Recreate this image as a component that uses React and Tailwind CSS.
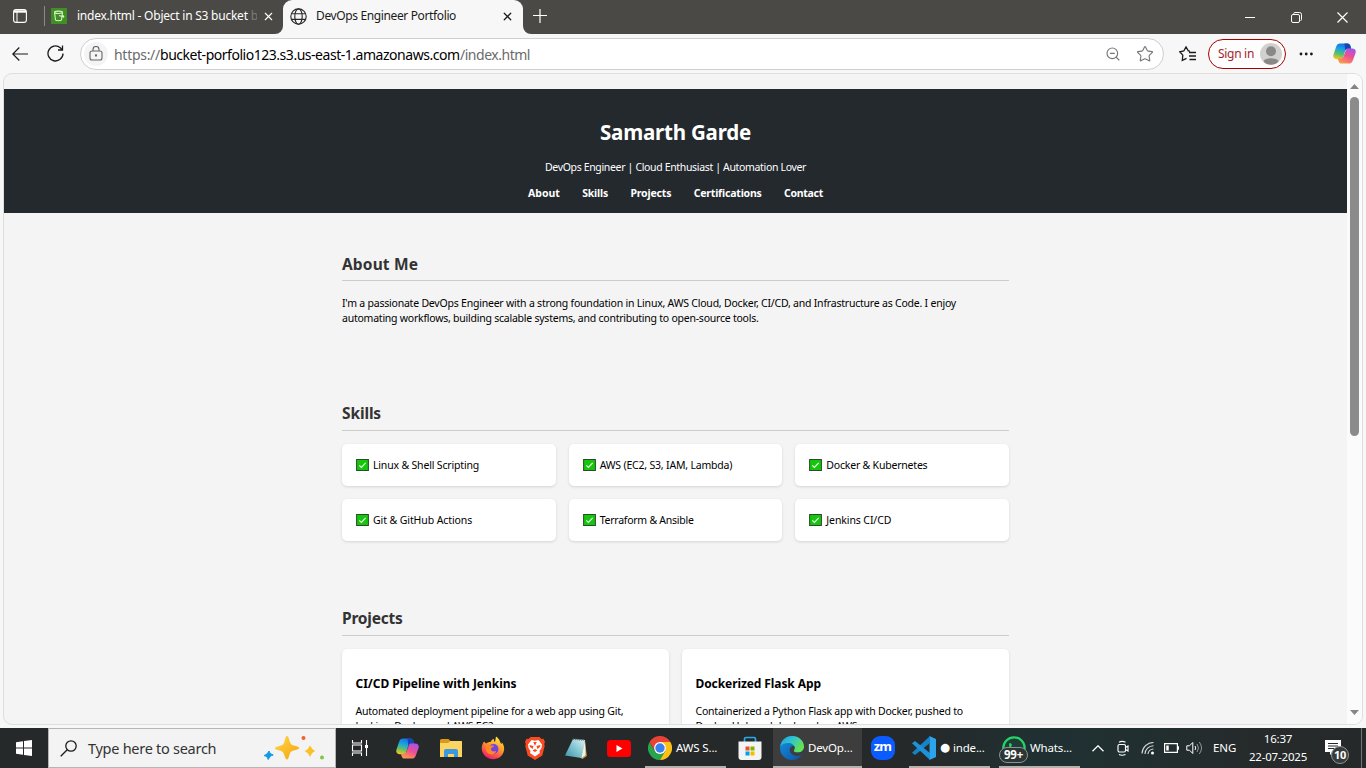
import { Star, ZoomOut, X } from "lucide-react";

const skills = [
  { name: "Linux & Shell Scripting", cls: "tracking-[-0.17px]" },
  { name: "AWS (EC2, S3, IAM, Lambda)", cls: "tracking-[-0.19px]" },
  { name: "Docker & Kubernetes", cls: "tracking-[-0.2px]" },
  { name: "Git & GitHub Actions", cls: "tracking-[-0.09px]" },
  { name: "Terraform & Ansible", cls: "tracking-[-0.25px]" },
  { name: "Jenkins CI/CD", cls: "tracking-[-0.1px]" },
];

const projects = [
  {
    title: "CI/CD Pipeline with Jenkins",
    titleCls: "tracking-[-0.03px]",
    lines: ["Automated deployment pipeline for a web app using Git,", "Jenkins, Docker, and AWS EC2."],
  },
  {
    title: "Dockerized Flask App",
    titleCls: "tracking-[-0.09px]",
    lines: ["Containerized a Python Flask app with Docker, pushed to", "Docker Hub and deployed on AWS."],
  },
];

function CopilotIcon({ id, className }) {
  return (
    <svg viewBox="0 0 24 22" className={className}>
      <defs>
        <linearGradient id={id + "a"} x1="0.6" y1="0" x2="0.3" y2="1">
          <stop offset="0" stopColor="#1c6be0" />
          <stop offset=".35" stopColor="#15a0e6" />
          <stop offset=".7" stopColor="#5fc06a" />
          <stop offset="1" stopColor="#f5c518" />
        </linearGradient>
        <linearGradient id={id + "b"} x1="0.8" y1="0" x2="0.3" y2="1">
          <stop offset="0" stopColor="#a252ed" />
          <stop offset=".5" stopColor="#ee5091" />
          <stop offset="1" stopColor="#fb9a4d" />
        </linearGradient>
      </defs>
      <path d="M7.500.5h7.500c1.900 0 2.700 1 3.200 2.700L19 6h-3.200c-1.900 0-2.600.8-3.100 2.500l-1.900 6.200c-.6 1.600-1.300 2.300-2.800 2.300H4c-2.700 0-4.400-1.800-3.600-4.700L3.200 4C4 1.700 5.200.5 7.500.5z" fill={`url(#${id}a)`} />
      <path d="M12 .5h3c1.900 0 2.700 1 3.200 2.700L19 6h-3.200c-1.600 0-2.500.6-3 2z" fill="#1545b5" />
      <path d="M16.500 21.500H9c-1.900 0-2.700-1-3.200-2.700L5 16.500h3c1.900 0 2.600-.8 3.100-2.500L13.200 8c.6-1.600 1.300-2.300 2.800-2.300h4c2.700 0 4.400 1.800 3.600 4.700L20.800 18c-.8 2.300-2 3.500-4.300 3.500z" fill={`url(#${id}b)`} />
    </svg>
  );
}

function CheckBadge() {
  return (
    <svg viewBox="0 0 13 12" className="h-3 w-[13px] shrink-0">
      <rect x=".6" y=".5" width="11.800" height="11" fill="#16c60c" stroke="#2b4a2b" />
      <path d="m3.300 6.400 2.100 2L9.700 3.800" fill="none" stroke="#e8ffe6" strokeWidth="1.200" />
    </svg>
  );
}

function TabBar() {
  return (
    <div className="flex h-[34px] bg-[#4b4946] text-[12px] text-white">
      <div className="flex w-[283px] items-center pb-0.5 pl-[13px]">
        <svg viewBox="0 0 14 14" className="size-[14px]" fill="none" stroke="#fff">
          <rect x=".6" y=".6" width="12.800" height="12.800" rx="2.500" strokeWidth="1.100" />
          <path d="M1 2.500h12" strokeWidth="2.400" />
          <path d="M4 3v10" strokeWidth="1" />
        </svg>
        <div className="ml-[17px] h-5 w-px bg-[#8d8b89]" />
        <svg viewBox="0 0 16 16" className="ml-1.5 size-4">
          <rect width="16" height="16" fill="#3f8f24" />
          <path d="M3.500 4.200c0-1.500 8-1.500 8 0l-1 7.800c-.6 1-5.400 1-6 0z M3.700 4.800c1.500 1 6 1 7.600 0 M8 7.500l4.700 1.500c.5-.8-.4-1.200-1.500-1.700" fill="none" stroke="#d9f3cb" strokeWidth="1.100" />
        </svg>
        <div className="ml-2.5 flex w-[180px] overflow-hidden whitespace-pre">
          <span className="tracking-[-0.235px]">index.html - Object in S3 bucket</span>
          <span className="text-[#7b7977]"> b</span>
        </div>
        <X className="ml-[5px] size-[13px]" strokeWidth={2} />
      </div>
      <div className="relative flex w-60 items-center rounded-t-[9px] bg-[#f7f7f7] pb-0.5 pl-[7px] text-[#1b1b1b]">
        <svg viewBox="0 0 8 8" className="absolute bottom-0 -left-2 size-2"><path d="M8 0v8H0a8 8 0 0 0 8-8z" fill="#f7f7f7" /></svg>
        <svg viewBox="0 0 8 8" className="absolute -right-2 bottom-0 size-2"><path d="M0 0v8h8a8 8 0 0 1-8-8z" fill="#f7f7f7" /></svg>
        <svg viewBox="0 0 17 17" className="size-[17px]" fill="none" stroke="#2a2a2a" strokeWidth="1.150">
          <circle cx="8.500" cy="8.500" r="7.700" />
          <ellipse cx="8.500" cy="8.500" rx="3.700" ry="7.700" />
          <path d="M1.500 5.700h14M1.500 11.300h14" />
        </svg>
        <span className="ml-[9px] w-[186px] tracking-[-0.37px] whitespace-pre">DevOps Engineer Portfolio</span>
        <X className="-ml-px size-[13px]" strokeWidth={2.300} />
      </div>
      <svg viewBox="0 0 14 14" className="mt-[9px] ml-[10px] size-[14px]" stroke="#fff" strokeWidth="1.200"><path d="M7 0v14M0 6.500h14" /></svg>
      <div className="ml-auto flex items-center pr-[18px]">
        <div className="mr-[36px] h-px w-[10px] bg-white" />
        <svg viewBox="0 0 11 11" className="mr-[35px] size-[11px]" fill="none" stroke="#fff">
          <rect x=".5" y="2.500" width="8" height="8" rx="1.500" />
          <path d="M2.800 2V1.500a1 1 0 0 1 1-1H8.500a2 2 0 0 1 2 2v5a1 1 0 0 1-1 1" />
        </svg>
        <svg viewBox="0 0 11 11" className="size-[11px]" stroke="#fff" strokeWidth="1.200"><path d="m.5.5 10 10M10.500.5l-10 10" /></svg>
      </div>
    </div>
  );
}

function Toolbar() {
  return (
    <div className="flex h-[39px] items-center bg-[#f7f7f7] pl-3">
      <svg viewBox="0 0 16 14" className="h-[14px] w-4" fill="none" stroke="#1b1b1b" strokeWidth="1.200"><path d="M16 7H.8M7.300.5.8 7l6.500 6.500" /></svg>
      <svg viewBox="0 0 17 17" className="ml-[19px] size-[17px]" fill="none" stroke="#1b1b1b" strokeWidth="1.300">
        <path d="M16 8.500A7.500 7.500 0 1 1 13.300 2.700L15.500 5M15.500.5V5H11" />
      </svg>
      <div className="ml-4 flex h-8 w-[1084px] items-center rounded-full border border-[#cfcfcf] bg-white pl-[3px]">
        <div className="flex size-6 items-center justify-center rounded-full bg-[#f4f4f4]">
          <svg viewBox="0 0 14 15" className="h-[15px] w-[14px]" fill="none" stroke="#666" strokeWidth="1.100">
            <rect x="1" y="5" width="12" height="9" rx="2" />
            <path d="M4 5V3.500a3 3 0 0 1 6 0V5" />
            <circle cx="7" cy="9.500" r=".6" fill="#555" />
          </svg>
        </div>
        <div className="ml-[6px] flex pt-px text-[14px] whitespace-pre text-[#6b6b6b]">
          <span className="w-[46px] tracking-[-0.29px]">https://</span>
          <span className="w-[300px] tracking-[-0.47px] text-black">bucket-porfolio123.s3.us-east-1.amazonaws.com</span>
          <span className="tracking-[-0.48px]">/index.html</span>
        </div>
        <ZoomOut className="ml-auto size-4 text-[#777]" strokeWidth={1.700} />
        <Star className="mr-[9px] ml-[15px] size-[18px] text-[#777]" strokeWidth={1.500} />
      </div>
      <svg viewBox="0 0 17 16" className="ml-[15px] h-4 w-[17px]" fill="none" stroke="#1b1b1b" strokeWidth="1.300">
        <path d="M11 5.200 9.300 4.900 7 .9 4.800 5l-4 .8 3 3.300-.5 5.200 4.200-2M10 6.500h7M10 10h7M10.500 13.500H17" />
      </svg>
      <div className="ml-3 flex h-[30px] w-[78px] items-center justify-between rounded-full border border-[#a80000] bg-[#fdfdfd] pr-[3px] pl-[9px] text-[12px] tracking-[-0.3px] whitespace-pre text-[#a4262c]">
        Sign in
        <svg viewBox="0 0 22 22" className="size-[22px]">
          <defs><clipPath id="avatar"><circle cx="11" cy="11" r="11" /></clipPath></defs>
          <g clipPath="url(#avatar)">
            <rect width="22" height="22" fill="#d2d0ce" />
            <circle cx="11" cy="8.300" r="5" fill="#8a8886" />
            <path d="M3.500 18c2-3.700 13-3.700 15 0-2 5-13 5-15 0z" fill="#8a8886" />
          </g>
        </svg>
      </div>
      <svg viewBox="0 0 14 4" className="ml-[13px] h-1 w-[14px]" fill="#1b1b1b"><circle cx="2" cy="2" r="1.400" /><circle cx="7.200" cy="2" r="1.400" /><circle cx="12.400" cy="2" r="1.400" /></svg>
      <CopilotIcon id="top" className="ml-5 h-[21px] w-[23px]" />
    </div>
  );
}

function Heading({ children, className }) {
  return <h2 className={"border-b border-[#ccc] text-[15.500px] leading-[22px] font-bold text-[#333] " + className}>{children}</h2>;
}

function Page() {
  return (
    <div className="h-[650px] min-w-0 flex-1 overflow-hidden pt-[15px] text-[10.500px] leading-[15px] text-black">
      <header className="flex h-[124px] flex-col items-center bg-[#24292e] text-white">
        <h1 className="mt-7 text-[20.500px] leading-[30px] font-bold tracking-[-0.2px]">Samarth Garde</h1>
        <p className="mt-[13px] tracking-[-0.34px]">DevOps Engineer | Cloud Enthusiast | Automation Lover</p>
        <nav className="mt-[11px] flex w-[295px] justify-between font-bold">
          <span>About</span>
          <span className="tracking-[-0.17px]">Skills</span>
          <span className="tracking-[-0.15px]">Projects</span>
          <span className="tracking-[-0.19px]">Certifications</span>
          <span className="tracking-[-0.28px]">Contact</span>
        </nav>
      </header>
      <main className="mx-auto w-[667px] whitespace-pre">
        <section className="h-[149px] pt-[40px]">
          <Heading className="pb-[5px] tracking-[0.14px]">About Me</Heading>
          <p className="mt-[15px] tracking-[-0.215px]">I'm a passionate DevOps Engineer with a strong foundation in Linux, AWS Cloud, Docker, CI/CD, and Infrastructure as Code. I enjoy</p>
          <p className="tracking-[-0.235px]">automating workflows, building scalable systems, and contributing to open-source tools.</p>
        </section>
        <section className="h-[205px] pt-[40px]">
          <Heading className="pb-[6px] tracking-[-0.13px]">Skills</Heading>
          <div className="mt-[13px] grid grid-cols-3 gap-[13px]">
            {skills.map((s) => (
              <div key={s.name} className="flex h-[42px] items-center gap-1 rounded-[5px] bg-white pl-[14px] shadow-[0_1px_3px_rgba(0,0,0,0.13)]">
                <CheckBadge />
                <span className={s.cls}>{s.name}</span>
              </div>
            ))}
          </div>
        </section>
        <section className="pt-[40px]">
          <Heading className="pb-[6px] tracking-[-0.22px]">Projects</Heading>
          <div className="mt-[13px] grid grid-cols-2 gap-[13px]">
            {projects.map((p) => (
              <div key={p.title} className="h-[110px] rounded-[5px] bg-white px-[13.500px] pt-[26px] shadow-[0_1px_3px_rgba(0,0,0,0.13)]">
                <h3 className={"text-[12px] leading-[18px] font-bold " + p.titleCls}>{p.title}</h3>
                <div className="mt-[11px] tracking-[-0.21px]">
                  {p.lines.map((l) => <p key={l}>{l}</p>)}
                </div>
              </div>
            ))}
          </div>
        </section>
      </main>
    </div>
  );
}

function SearchBox() {
  return (
    <div className="flex h-10 w-72 items-center border border-[#b5b5b5] bg-[#f3f3f3] pl-[11px]">
      <svg viewBox="0 0 17 17" className="size-[17px]" fill="none" stroke="#1b1b1b" strokeWidth="1.300"><circle cx="11" cy="6" r="5.200" /><path d="M7.200 9.800.7 16.300" /></svg>
      <span className="ml-[11px] w-[175px] pt-px text-[14.500px] tracking-[-0.275px] whitespace-pre text-[#333]">Type here to search</span>
      <svg viewBox="0 0 62 26" className="h-[26px] w-[62px]">
        <defs><linearGradient id="spark" x2="1" y2="1"><stop offset="0" stopColor="#ffd84a" /><stop offset="1" stopColor="#f5a30a" /></linearGradient></defs>
        <path d="M24 1c2 0 2.500 7 4.500 8.500s7.500 1.500 7.500 3.500-6 2-8 3.800-2 7.700-4 7.700-2.500-6-4.500-7.700-7.500-1.500-7.500-3.500 6-2 8-3.800S22 1 24 1z" fill="url(#spark)" />
        <path d="M47 10.500c1.200 1.500 1.300 3.500 5.500 5.500-4 1.500-4 3.500-5.500 6-1.200-2.500-1.800-4-5.500-6 4-1.500 4-3.500 5.500-5.500z" fill="#f9c125" />
        <path d="M6 16c.8 2 1 2.500 4.200 4-3 .8-3 1.500-5 4.500-.8-2.500-1-3-4.200-4 3-1 3.500-2 5-4.500z" fill="#0f9bea" stroke="#0f9bea" />
        <circle cx="40.500" cy="3" r="2" fill="#f2622d" />
        <circle cx="59" cy="22.500" r="2" fill="#86c440" />
      </svg>
    </div>
  );
}

function TaskIcon({ className, children }) {
  return <div className={"flex h-10 items-center justify-center " + className}>{children}</div>;
}

function TaskApp({ className, label, children }) {
  return (
    <div className={"flex h-10 items-center gap-1 border-b-2 border-[#b5b2ae] pt-px whitespace-pre " + className}>
      {children}
      <span className="flex items-center gap-1">{label}</span>
    </div>
  );
}

function Taskbar() {
  return (
    <div className="flex h-10 bg-[linear-gradient(90deg,#25292a_0%,#25292a_68%,#203032_76%,#212f30_83%,#262a2b_92%,#25292a_100%)] text-[11.500px] tracking-[-0.15px] text-white">
      <div className="flex w-12 items-center justify-center">
        <svg viewBox="0 0 16 16" className="size-4" fill="#fff"><path d="M0 2.200 7 1.200v6.400H0zM8 1l8-1v7.600H8zM0 8.500h7v6.300l-7-1zM8 8.500h8V16l-8-1.100z" /></svg>
      </div>
      <SearchBox />
      <TaskIcon className="w-12">
        <svg viewBox="0 0 18 16" className="h-4 w-[18px]" fill="none" stroke="#fff" strokeWidth="1.100"><path d="M1.500 0v3h9V0M1.500 16v-3h9v3M1.500 5h9v6h-9zM15.500 0v16" /><path d="M14 6.500h3" strokeWidth="3" /></svg>
      </TaskIcon>
      <TaskIcon className="w-[47px]"><CopilotIcon id="task" className="h-[21px] w-[23px]" /></TaskIcon>
      <TaskIcon className="w-[39px]">
        <svg viewBox="0 0 22 19" className="h-[19px] w-[22px]"><path d="M0 1.500Q0 0 1.500 0h7l2 2H22v5H0z" fill="#d99a17" /><path d="M0 4h8l2.500-2H21q1 0 1 1v15H0z" fill="#fcd462" /><path d="M4 18v-6q0-2 2-2h10q2 0 2 2v6h-4v-3H8v3z" fill="#3c99e0" /></svg>
      </TaskIcon>
      <TaskIcon className="w-[46px]">
        <svg viewBox="0 0 24 24" className="size-6">
          <defs><linearGradient id="fox" x1=".8" y1="0" x2=".3" y2="1"><stop offset="0" stopColor="#fff14a" /><stop offset=".45" stopColor="#ff9a28" /><stop offset="1" stopColor="#f5156c" /></linearGradient></defs>
          <path d="M3 5.500l2 2C7 6 8 6 9.500 6c1-2 2.200-2.800 3.500-3.200-.5 1.500 0 2.200 1 3.200l1-5.500C18 2.500 19 5 19.500 7l1.500 1-.3-2C23 9 23.500 12 23 14.500 21.800 20 17.500 23.200 12 23.200S1.500 19 .8 13.500C.4 10.500 1.500 7.500 3 5.500z" fill="url(#fox)" />
          <circle cx="12.500" cy="13" r="5" fill="#7542e5" />
          <path d="M4.500 9c3 0 4 1 6.500.5l2 .3c-.3 1.500-2.500 1.700-3 2.700-.3 2.500 2 3.700 5.200 2.500-1 3-4 4-6.700 3C5.500 17 4 13 4.500 9z" fill="#ff8a24" />
        </svg>
      </TaskIcon>
      <TaskIcon className="w-[38px]">
        <svg viewBox="0 0 20 23" className="h-[23px] w-5">
          <path d="M5.500 0h9l2 2 2-.3L20 5l-.8 2 .5 2-2.400 9.500L10 23l-7.300-4.500L.3 9l.5-2L0 5l1.500-3.300 2 .3z" fill="#fb4a20" />
          <path d="M10 3.800 13.500 3 17 7.500l-.5 3.500-2 3 .5 2-5 3.500-5-3.500.5-2-2-3L3 7.500 6.500 3z" fill="#fff" />
          <path d="m4.500 8 4 1-.8 3L5 10zM15.500 8l-4 1 .8 3L15 10zM10 12l2.500 1.500L10 15l-2.500-1.500zM8.300 5h3.400L10 9z" fill="#fb4a20" />
        </svg>
      </TaskIcon>
      <TaskIcon className="w-11">
        <svg viewBox="0 0 22 21" className="h-[21px] w-[22px]">
          <defs><linearGradient id="note" x1="1" y1="0" x2="0" y2="1"><stop offset="0" stopColor="#e1f4f6" /><stop offset=".5" stopColor="#82c5d1" /><stop offset="1" stopColor="#3c93aa" /></linearGradient></defs>
          <path d="m20 3 1.800 15-4.300 3L14 19z" fill="#c8a24f" />
          <path d="M8 1 20 2l-3.500 18L0 17.500z" fill="url(#note)" />
          <path d="m20 2 .5 15-4 3z" fill="#eaf5f5" />
          <path d="m8 1.200 12 1" stroke="#607b82" strokeWidth="1.500" strokeDasharray="1 1" />
        </svg>
      </TaskIcon>
      <TaskIcon className="w-[42px]">
        <svg viewBox="0 0 24 17" className="h-[17px] w-6"><rect width="24" height="17" rx="3.500" fill="#f00" /><path d="m9.500 5 6 3.500-6 3.500z" fill="#fff" /></svg>
      </TaskIcon>
      <TaskApp className="ml-[5px] w-[81px] pl-[3px]" label="AWS S...">
        <svg viewBox="0 0 24 24" className="size-6">
          <path d="M1.600 6A12 12 0 0 1 22.400 6H12z" fill="#ea4335" />
          <path d="M1.600 6A12 12 0 0 0 12 24l5.200-9L6.800 15z" fill="#28a54b" />
          <path d="M22.400 6A12 12 0 0 1 12 24l5.200-9L12 6z" fill="#fbc116" />
          <path d="M1.600 6 7 15l1-5 4-4z" fill="#ea4335" />
          <circle cx="12" cy="12" r="5.900" fill="#fff" />
          <circle cx="12" cy="12" r="4.700" fill="#3b80ee" />
        </svg>
      </TaskApp>
      <TaskIcon className="w-[47px] pl-px">
        <svg viewBox="0 0 24 24" className="size-6"><path d="M6.500 6V3q0-1.500 1.500-1.500h8q1.500 0 1.500 1.500v3" fill="none" stroke="#25abe5" strokeWidth="1.700" /><path d="M.5 5.500h23V21q0 3-3 3h-17q-3 0-3-3z" fill="#f4f4f4" /><path d="M7.500 10.500h4v4h-4z" fill="#f05024" /><path d="M12.500 10.500h4v4h-4z" fill="#7db800" /><path d="M7.500 15.500h4v4h-4z" fill="#00a1ee" /><path d="M12.500 15.500h4v4h-4z" fill="#fdb900" /></svg>
      </TaskIcon>
      <TaskApp className="w-[89px] bg-[#3d3d3d] pl-[7px]" label="DevOp...">
        <svg viewBox="0 0 24 24" className="size-6">
          <defs>
            <linearGradient id="edgeA" x1="0" y1="0" x2="1" y2=".5"><stop offset="0" stopColor="#209ee3" /><stop offset=".5" stopColor="#30c6cc" /><stop offset="1" stopColor="#66e34e" /></linearGradient>
            <linearGradient id="edgeB" x1="0" y1="0" x2="1" y2="1"><stop offset="0" stopColor="#1693dd" /><stop offset="1" stopColor="#0b4fa6" /></linearGradient>
          </defs>
          <circle cx="12" cy="12" r="12" fill="url(#edgeB)" />
          <path d="M.3 10.500C1.200 4.500 6 0 12 0c7 0 12 5 12 10.500 0 4-3 6-6 6-2.500 0-4.300-.9-4.300-1.600 0-.5 1-1.200 1-2.900C14.700 9 11.500 7 8.500 7 4.500 7 1.500 8.500.3 10.500z" fill="url(#edgeA)" />
          <path d="M14.600 11c.3 1.800-1 3-.9 4 .1.900 2 1.600 4.300 1.600 3 0 5-1.500 6-4v4.500l-1.500 1.200c-3 2-7 2.400-10.200.2C9.500 16.500 9 13.500 10.500 11.500 11.600 10 14.300 9.500 14.600 11z" fill="#3d3d3d" />
        </svg>
      </TaskApp>
      <TaskIcon className="w-[43px] pr-0.5">
        <div className="flex size-6 items-center justify-center rounded-[9px] bg-[#0b5cff] pb-0.5 text-[13px] font-bold tracking-[-0.7px]">zm</div>
      </TaskIcon>
      <TaskApp className="ml-1 w-[81px] pl-[3px]" label={<><span className="-mr-px font-['DejaVu_Sans']">●</span>inde...</>}>
        <svg viewBox="0 0 24 24" className="size-6"><path d="M17.500 0 24 3v18l-6.500 3z" fill="#2ca4ec" /><path d="M18 0v7L3 19l-3-2.300z" fill="#1683c7" /><path d="M0 7.300 3 5l15 12v7z" fill="#1c92d8" /></svg>
      </TaskApp>
      <TaskApp className="ml-[9px] w-[81px] pl-[3px]" label="Whats...">
        <div className="relative size-6">
          <svg viewBox="0 0 24 24" className="size-6"><circle cx="12" cy="12" r="10.700" fill="#1f3c36" stroke="#25d366" strokeWidth="2.200" /><path d="M7 8c1-2 2-1 3 1l-1 2c1 2 3 4 5 5l2-1 2 2c-1 4-11 0-11-9z" fill="#25d366" /></svg>
          <div className="absolute top-[11px] -left-[3px] flex h-4 w-[29px] items-center justify-center rounded-full border border-[#8b9290] bg-[#2d3635] text-[11.500px] font-bold tracking-[-0.2px]">99+</div>
        </div>
      </TaskApp>
      <div className="ml-auto flex items-center">
        <svg viewBox="0 0 12 7" className="h-[7px] w-3" fill="none" stroke="#fff" strokeWidth="1.300"><path d="m.5 6.300 5.500-5.500 5.500 5.500" /></svg>
        <svg viewBox="0 0 12 16" className="ml-[13px] h-4 w-3" fill="none" stroke="#fff" strokeWidth="1.150"><rect x="1" y="4.500" width="7.500" height="7.500" rx="1.500" /><path d="m8.500 7.500 2.500-1.500v5l-2.500-1.500M2 2.200Q5 .5 8.500 2.200M2 14.500q3 1.500 6.500 0" /></svg>
        <svg viewBox="0 0 14 14" className="ml-3 size-[14px]" fill="none" stroke="#ddd" strokeWidth="1.100"><path d="M1 12.500A11.500 11.500 0 0 1 12.500 1.500M4 13A8.500 8.500 0 0 1 12.500 4.800M7 13a5.500 5.500 0 0 1 5.500-5" /><circle cx="11.500" cy="12" r="1.500" fill="#fff" stroke="none" /></svg>
        <svg viewBox="0 0 15 10" className="ml-[9px] h-2.5 w-[15px]" fill="none" stroke="#fff" strokeWidth="1.200"><path d="M.6.6h12.800v8.800H.6zM14.500 3.200v3.600" /><path d="M3.500 2.500v5" strokeWidth="2.500" /></svg>
        <svg viewBox="0 0 17 14" className="ml-[7px] h-[14px] w-[17px]" fill="none" stroke="#fff"><path d="M.8 4.800h2.700L6.800 1.500v11L3.500 9.200H.8z" /><path d="M9 5q1.500 2 0 4" /><path d="M11 3q3 4 0 8M13.300 1q4.500 6 0 12" opacity=".5" /></svg>
        <span className="ml-[10px] w-[25px] tracking-[-0.1px]">ENG</span>
        <div className="ml-[7px] flex w-[66px] flex-col items-center text-[11.500px] leading-[18px] tracking-[-0.2px] whitespace-pre">
          <span>16:37</span>
          <span>22-07-2025</span>
        </div>
        <div className="relative ml-[14px] h-[26px] w-6">
          <svg viewBox="0 0 16 15" className="absolute top-[5px] left-0 h-[15px] w-4"><path d="M0 0h16v12H8l-3 3v-3H0z" fill="#fff" /><path d="M3 3.500h10M3 6h10M3 8.500h6" stroke="#25292a" /></svg>
          <div className="absolute top-[11px] left-[6px] flex size-[18px] items-center justify-center rounded-full border border-[#919494] bg-[#383b3c] text-[11px] font-bold tracking-[-0.4px]">10</div>
        </div>
        <div className="ml-3 h-10 w-px bg-[#737676]" />
        <div className="w-1" />
      </div>
    </div>
  );
}

export default function App() {
  return (
    <div className="h-[768px] w-[1366px] overflow-hidden bg-[#f7f7f7] font-['Noto_Sans',sans-serif] select-none">
      <TabBar />
      <Toolbar />
      <div className="h-[655px] px-[3px]">
        <div className="flex h-[652px] overflow-hidden rounded-[9px] border border-[#dedede] bg-[#f4f4f4]">
          <Page />
          <div className="flex h-full w-[15px] flex-col items-center bg-[#fbfbfb] pt-[10px] pb-[9px]">
            <svg viewBox="0 0 9 5" className="h-[5px] w-[9px]"><path d="M0 5 4.500 0 9 5z" fill="#858585" /></svg>
            <div className="mt-2 h-[339px] w-[9px] rounded-full bg-[#8b8b8b]" />
            <svg viewBox="0 0 9 5" className="mt-auto h-[5px] w-[9px]"><path d="m0 0 4.500 5L9 0z" fill="#858585" /></svg>
          </div>
        </div>
      </div>
      <Taskbar />
    </div>
  );
}
